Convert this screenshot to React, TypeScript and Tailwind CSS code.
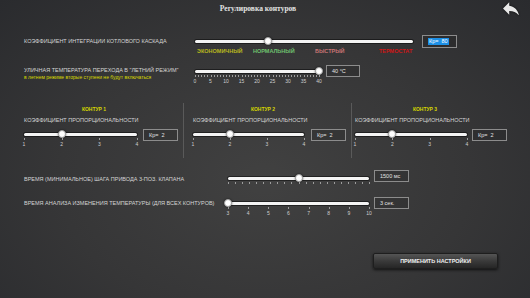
import React from 'react';

type Mark = { at: number; text: string };

interface SliderProps {
  width: string;
  value: number;
  ticks?: number;
  marks?: Mark[];
}

const Slider: React.FC<SliderProps> = ({ width, value, ticks = 0, marks = [] }) => (
  <div className={width}>
    <div className="relative h-[8px] flex items-center">
      <div className="w-full h-[3px] rounded-full bg-[#f4f4f4] shadow-[0_0_0_1px_rgba(0,0,0,0.45)]" />
      <div
        className="absolute top-0 w-[8px] h-[8px] -translate-x-1/2 rounded-full bg-white border border-[#a0a0a0] shadow-[0_0_2px_rgba(0,0,0,0.6)]"
        style={{ left: `${value * 100}%` }}
      />
    </div>
    {ticks > 0 && (
      <div className="relative h-[3px]">
        {Array.from({ length: ticks }).map((_, i) => (
          <div
            key={i}
            className="absolute top-0 w-px h-[2px] bg-[#9c9c9c]"
            style={{ left: `${(i / (ticks - 1)) * 100}%` }}
          />
        ))}
      </div>
    )}
    {marks.length > 0 && (
      <div className="relative h-[6px] text-[5px] leading-[6px] text-[#cfcfcf]">
        {marks.map(m => (
          <span key={m.text} className="absolute top-0 -translate-x-1/2" style={{ left: `${m.at * 100}%` }}>
            {m.text}
          </span>
        ))}
      </div>
    )}
  </div>
);

const ValueBox: React.FC<{ className?: string; children: React.ReactNode }> = ({ className = '', children }) => (
  <div className={`h-[12px] border border-[#8c8c8c] bg-black/10 flex items-center px-[5px] text-[5.5px] text-[#e2e2e2] ${className}`}>
    {children}
  </div>
);

const range = (from: number, to: number, step = 1): Mark[] => {
  const out: Mark[] = [];
  for (let v = from; v <= to; v += step) out.push({ at: (v - from) / (to - from), text: String(v) });
  return out;
};

const Contour: React.FC<{ title: string; width: string; boxGap: string }> = ({ title, width, boxGap }) => (
  <div className="flex flex-col pt-[3px]">
    <div className="w-[140px] text-center text-[5px] leading-[7px] font-bold text-[#d6d600]">{title}</div>
    <div className="mt-[4px] text-[5.5px] leading-[7px]">КОЭФФИЦИЕНТ ПРОПОРЦИОНАЛЬНОСТИ</div>
    <div className="mt-[5px] flex items-start">
      <div className="pt-[1px]">
        <Slider width={width} value={1 / 3} ticks={4} marks={range(1, 4)} />
      </div>
      <ValueBox className={`${boxGap} w-[35px]`}>Кр=&nbsp; 2</ValueBox>
    </div>
  </div>
);

export default function App() {
  return (
    <div className="w-[530px] h-[298px] overflow-hidden bg-[radial-gradient(ellipse_at_50%_60%,#414141_0%,#363637_55%,#2a2b2e_100%)] font-['Liberation_Sans',Arial,sans-serif] text-[#d4d4d4]">
      {/* header */}
      <header className="relative h-[17px] flex items-center justify-center pr-[14px]">
        <h1 className="font-['Liberation_Serif','Times_New_Roman',serif] font-bold text-[7.5px] text-[#e2e2e2]">
          Регулировка контуров
        </h1>
        <svg className="absolute right-[11px] top-[2px] w-[16px] h-[13px] drop-shadow-[0_0_1px_rgba(0,0,0,0.8)]" viewBox="3 5 18 14" fill="#e8e8e8">
          <path d="M10 9V5l-7 7 7 7v-4.1c5 0 8.5 1.6 11 5.1-1-5-4-10-11-11z" />
        </svg>
      </header>

      <div className="pl-[24px]">
        {/* cascade integration */}
        <div className="mt-[18px] flex items-start">
          <div className="w-[171px] text-[5.5px] leading-[13px]">КОЭФФИЦИЕНТ ИНТЕГРАЦИИ КОТЛОВОГО КАСКАДА</div>
          <div className="pt-[2px]">
            <Slider width="w-[218px]" value={0.335} />
            <div className="mt-[3px] flex text-[5.5px] leading-[6px] font-bold">
              <span className="ml-[2px] w-[56px] text-[#b8b820]">ЭКОНОМИЧНЫЙ</span>
              <span className="w-[62px] text-[#6fc26f]">НОРМАЛЬНЫЙ</span>
              <span className="w-[64px] text-[#c77474]">БЫСТРЫЙ</span>
              <span className="text-[#d01515]">ТЕРМОСТАТ</span>
            </div>
          </div>
          <ValueBox className="ml-[9px] w-[35px] h-[13px]">
            <span className="bg-[#1c8fe6] text-white px-[1px] leading-[7px]">Кр=&nbsp; 80</span>
          </ValueBox>
        </div>

        {/* summer mode */}
        <div className="mt-[11px] flex items-start">
          <div className="w-[171px] pt-[2px] leading-[7px]">
            <div className="text-[5.5px]">УЛИЧНАЯ ТЕМПЕРАТУРА ПЕРЕХОДА В "ЛЕТНИЙ РЕЖИМ"</div>
            <div className="text-[5px] text-[#d8d800]">в летнем режиме вторые ступени не будут включаться</div>
          </div>
          <div className="pt-[2px]">
            <Slider width="w-[124px]" value={1} ticks={41} marks={range(0, 40, 5)} />
          </div>
          <ValueBox className="ml-[7px] w-[34px]">40 °C</ValueBox>
        </div>

        {/* contours */}
        <div className="mt-[19px] flex items-stretch h-[55px]">
          <div className="w-[154px]">
            <Contour title="КОНТУР 1" width="w-[113px]" boxGap="ml-[6px]" />
          </div>
          <div className="ml-[5px] w-px bg-[#5a5a5a]" />
          <div className="ml-[9px] w-[153px]">
            <Contour title="КОНТУР 2" width="w-[111px]" boxGap="ml-[7px]" />
          </div>
          <div className="ml-[5px] w-px bg-[#5a5a5a]" />
          <div className="ml-[3px] w-[152px]">
            <Contour title="КОНТУР 3" width="w-[112px]" boxGap="ml-[5px]" />
          </div>
        </div>

        {/* valve step */}
        <div className="mt-[12px] flex items-start">
          <div className="w-[204px] pt-[3px] text-[5.5px] leading-[12px]">ВРЕМЯ (МИНИМАЛЬНОЕ) ШАГА ПРИВОДА 3-ПОЗ. КЛАПАНА</div>
          <div className="pt-[4px]">
            <Slider width="w-[141px]" value={0.5} ticks={21} />
          </div>
          <ValueBox className="ml-[5px] w-[35px]">1500 мс</ValueBox>
        </div>

        {/* analysis time */}
        <div className="mt-[12px] flex items-start">
          <div className="w-[204px] text-[5.5px] leading-[12px]">ВРЕМЯ АНАЛИЗА ИЗМЕНЕНИЯ ТЕМПЕРАТУРЫ (ДЛЯ ВСЕХ КОНТУРОВ)</div>
          <div className="pt-[2px]">
            <Slider width="w-[141px]" value={0} ticks={8} marks={range(3, 10)} />
          </div>
          <ValueBox className="ml-[5px] w-[35px]">3 сек.</ValueBox>
        </div>

        {/* apply */}
        <div className="mt-[37px] flex justify-end pr-[32px]">
          <button className="w-[125px] h-[16px] rounded-[2px] border border-[#1e1e1e] bg-gradient-to-b from-[#555555] via-[#3a3a3a] to-[#262626] shadow-[0_1px_3px_rgba(0,0,0,0.7)] text-[5.5px] font-bold text-[#f0f0f0]">
            ПРИМЕНИТЬ НАСТРОЙКИ
          </button>
        </div>
      </div>
    </div>
  );
}
